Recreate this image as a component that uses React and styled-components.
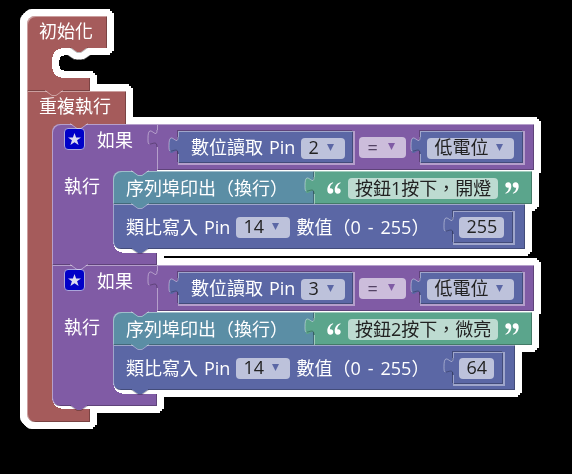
import React from "react";
import styled, { createGlobalStyle } from "styled-components";

const RED = "#a55b5b";
const PURPLE = "#805ba5";
const BLUE = "#5b67a5";
const TEAL = "#5b8ea5";
const GREEN = "#5ba58c";
const LIGHT = "rgba(255, 255, 255, 0.42)";
const DARK = "rgba(0, 0, 0, 0.26)";

const GlobalStyle = createGlobalStyle`
  body {
    margin: 0;
    background: #000;
    color: #fff;
    font: 18px/24px "Open Sans", "Noto Sans CJK TC", sans-serif;
  }
`;

const Workspace = styled.main`
  padding: 16px 27px;
`;

/* The chained hard shadows grow the silhouette into a white rim. */
const Program = styled.div`
  display: flex;
  flex-direction: column;
  width: max-content;
  filter: drop-shadow(3px 0 0 #fff) drop-shadow(-3px 0 0 #fff)
    drop-shadow(0 3px 0 #fff) drop-shadow(0 -3px 0 #fff)
    drop-shadow(2px 2px 0 #fff) drop-shadow(-2px -2px 0 #fff)
    drop-shadow(2px -2px 0 #fff) drop-shadow(-2px 2px 0 #fff);
`;

const BlockGroup = styled.section`
  display: flex;
  flex-direction: column;
  align-items: flex-start;
`;

const Row = styled.div`
  display: flex;
  align-items: ${(p) => (p.$stretch ? "stretch" : "flex-start")};
`;

const Head = styled.header`
  position: relative;
  display: flex;
  box-sizing: border-box;
  height: ${(p) => p.$height}px;
  padding: ${(p) => p.$padding};
  background: ${(p) => p.$color};
  border-top-left-radius: ${(p) => (p.$rounded ? 8 : 0)}px;
  box-shadow: inset 1px 1px 0 ${LIGHT}, inset -1px 0 0 ${(p) => (p.$joined ? "transparent" : DARK)};
  white-space: nowrap;
`;

const Wall = styled.div`
  box-sizing: border-box;
  width: ${(p) => p.$width}px;
  padding: 3px 12px;
  background: ${(p) => p.$color};
  box-shadow: inset 1px 0 0 ${LIGHT};
  white-space: nowrap;
`;

const Slot = styled.div`
  min-width: 38px;
  min-height: 30px;
  padding-bottom: ${(p) => p.$gap || 0}px;
  background:
    radial-gradient(circle at 100% 100%, transparent 8px, ${(p) => p.$color} 8px) top left / 9px 9px no-repeat,
    radial-gradient(circle at 100% 0, transparent 8px, ${(p) => p.$color} 8px) bottom left / 9px 9px no-repeat;
`;

const Foot = styled.footer`
  position: relative;
  width: ${(p) => p.$width}px;
  height: ${(p) => p.$height}px;
  background: ${(p) => p.$color};
  border-bottom-left-radius: ${(p) => (p.$rounded ? 8 : 0)}px;
  box-shadow: inset 1px 0 0 ${LIGHT}, inset -1px -1px 0 ${DARK};
`;

const Statement = styled.div`
  position: relative;
  display: flex;
  align-items: center;
  box-sizing: border-box;
  width: max-content;
  height: ${(p) => p.$height}px;
  padding: 0 ${(p) => p.$right}px 0 13px;
  background: ${(p) => p.$color};
  border-radius: ${(p) => (p.$last ? "0 0 0 8px" : "8px 0 0 0")};
  box-shadow: inset 1px 1px 0 ${LIGHT}, inset -1px -1px 0 ${DARK};
  white-space: nowrap;
`;

const ValueBlock = styled.div`
  position: relative;
  display: flex;
  align-items: center;
  box-sizing: border-box;
  height: ${(p) => p.$height}px;
  padding: ${(p) => p.$padding};
  background: ${(p) => p.$color};
  box-shadow: inset 1px 1px 0 ${LIGHT}, inset -1px -1px 0 ${DARK}${(p) =>
    p.$inset ? `, 1px 1px 0 1px ${LIGHT}, -1px -1px 0 ${DARK}` : ""};
  white-space: nowrap;
`;

const FieldLabel = styled.label`
  display: flex;
  align-items: center;
  gap: 6px;
`;

const Select = styled.select`
  appearance: none;
  box-sizing: border-box;
  height: 21px;
  margin: ${(p) => (p.$operator ? "0 14px 0 6px" : "2px 0 0")};
  padding: ${(p) => (p.$operator ? "0 28px 1px 8px" : "0 26px 3px 7px")};
  border: 0;
  border-radius: 4px;
  color: ${(p) => (p.$operator ? "#534364" : "#222")};
  font: inherit;
  line-height: 18px;
  background:
    url("data:image/svg+xml,%3Csvg xmlns='http://www.w3.org/2000/svg' width='7' height='7'%3E%3Cpath d='M0 0h7L3.5 7z' fill='%23${(p) =>
      p.$color.slice(1)}'/%3E%3C/svg%3E") right 11px top 6px no-repeat,
    rgba(255, 255, 255, 0.6);
`;

const Input = styled.input`
  field-sizing: content;
  box-sizing: border-box;
  height: 21px;
  margin: 2px 0 0;
  padding: 0 7px 3px;
  border: 0;
  border-radius: 4px;
  background: rgba(255, 255, 255, 0.6);
  color: #222;
  font: inherit;
  line-height: 18px;
`;

const Range = styled.span`
  display: flex;
  gap: 7px;
  margin: 0 24px 0 6px;
`;

const Mutator = styled.button`
  display: flex;
  box-sizing: border-box;
  width: 21px;
  height: 22px;
  margin: 0 12px 0 0;
  padding: 2px;
  border: 1px solid #aaa5dc;
  border-radius: 4px;
  background: #0000c8;
`;

const BumpShape = styled.svg`
  position: absolute;
  z-index: 1;
  left: ${(p) => p.$left}px;
  bottom: -5px;
  overflow: visible;
`;

const TabShape = styled.svg`
  position: absolute;
  left: -9px;
  top: 6px;
  overflow: visible;
`;

const QuoteShape = styled.svg`
  margin: ${(p) => (p.$closing ? "0 0 0 7px" : "0 7px 0 0")};
  transform: ${(p) => (p.$closing ? "rotate(180deg)" : "none")};
`;

function Bump({ color, left = 18, edge = LIGHT }) {
  return (
    <BumpShape $left={left} width="18" height="6" aria-hidden="true">
      <path d="M0 0V-1H18V0L11 5H7Z" fill={color} />
      <path d="M0 .5L7 5.5H11L18 .5" fill="none" stroke={edge} />
    </BumpShape>
  );
}

function Tab({ color }) {
  return (
    <TabShape width="10" height="17" aria-hidden="true">
      <path d="M10 17H9C9 6 0 26 0 8.5S9 11 9 0H10Z" fill={color} />
      <path d="M9 0C9 11 0 -9 0 8.5C0 12 0 14 1.5 14" fill="none" stroke={LIGHT} />
      <path d="M1.5 14C4 14.5 9 10 9 17" fill="none" stroke={DARK} />
    </TabShape>
  );
}

function Quote({ closing }) {
  return (
    <QuoteShape $closing={closing} width="14" height="12" viewBox="0 0 14 12" fill="#fff" aria-hidden="true">
      <path d="M6 .2C2.6 1 .3 4 .3 7.7C.3 10.3 1.5 11.8 3.4 11.8C5.1 11.8 6.3 10.6 6.3 9C6.3 7.4 5.2 6.3 3.7 6.3C3.3 6.3 3 6.4 2.8 6.5C3 4 4 2.2 6.2 1Z" />
      <path d="M13.4 .2C10 1 7.7 4 7.7 7.7C7.7 10.3 8.9 11.8 10.8 11.8C12.5 11.8 13.7 10.6 13.7 9C13.7 7.4 12.6 6.3 11.1 6.3C10.7 6.3 10.4 6.4 10.2 6.5C10.4 4 11.4 2.2 13.6 1Z" />
    </QuoteShape>
  );
}

function Dropdown({ value, color = BLUE, ...rest }) {
  return (
    <Select $color={color} defaultValue={value} {...rest}>
      <option value={value}>{value}</option>
    </Select>
  );
}

function PinField({ action, pin }) {
  return (
    <FieldLabel>
      <span>{action}</span>
      <span>Pin</span>
      <Dropdown value={pin} />
    </FieldLabel>
  );
}

function Condition({ pin }) {
  return (
    <ValueBlock $color={PURPLE} $height={46} $padding="0 11px 0 21px">
      <Tab color={PURPLE} />
      <ValueBlock $color={BLUE} $height={32} $padding="0 8px 0 13px" $inset>
        <Tab color={BLUE} />
        <PinField action="數位讀取" pin={pin} />
      </ValueBlock>
      <Dropdown value="=" color={PURPLE} $operator aria-label="比較" />
      <ValueBlock $color={BLUE} $height={32} $padding="0 9px 0 7px" $inset>
        <Tab color={BLUE} />
        <Dropdown value="低電位" aria-label="電位" />
      </ValueBlock>
    </ValueBlock>
  );
}

function PrintStatement({ text }) {
  return (
    <Row>
      <Statement $color={TEAL} $height={33} $right={26}>
        序列埠印出（換行）
        <Bump color={TEAL} />
      </Statement>
      <ValueBlock $color={GREEN} $height={33} $padding="0 13px">
        <Tab color={GREEN} />
        <Quote />
        <Input defaultValue={text} aria-label="序列埠印出" />
        <Quote closing />
      </ValueBlock>
    </Row>
  );
}

function WriteStatement({ value }) {
  return (
    <Statement $color={BLUE} $height={45} $right={12} $last>
      <PinField action="類比寫入" pin="14" />
      <Range>
        <span>數值（0</span>
        <span>-</span>
        <span>255）</span>
      </Range>
      <ValueBlock $color={BLUE} $height={32} $padding="0 9px 0 6px" $inset>
        <Tab color={BLUE} />
        <Input defaultValue={value} aria-label="數值" />
      </ValueBlock>
      <Bump color={BLUE} edge={DARK} />
    </Statement>
  );
}

function IfBlock({ pin, text, value, first, last }) {
  return (
    <BlockGroup>
      <Row>
        <Head $color={PURPLE} $height={47} $padding="4px 24px 0 12px" $rounded={first} $joined>
          <Mutator type="button" aria-label="設定">
            <svg width="15" height="16" viewBox="0 0 15 16" aria-hidden="true">
              <path d="M7.5 2L9.1 6.4H14L10.1 9.3L11.6 14L7.5 11.2L3.4 14L4.9 9.3L1 6.4H5.9Z" fill="#dcdcf0" />
            </svg>
          </Mutator>
          如果
          <Bump color={PURPLE} left={79} />
        </Head>
        <Condition pin={pin} />
      </Row>
      <Row $stretch>
        <Wall $color={PURPLE} $width={61}>執行</Wall>
        <Slot $color={PURPLE} $gap={4}>
          <PrintStatement text={text} />
          <WriteStatement value={value} />
        </Slot>
      </Row>
      <Foot $color={PURPLE} $width={105} $height={12} $rounded={last}>
        <Bump color={PURPLE} edge={last ? DARK : LIGHT} />
      </Foot>
    </BlockGroup>
  );
}

export default function App() {
  return (
    <>
      <GlobalStyle />
      <Workspace>
        <Program>
          <BlockGroup>
            <Head $color={RED} $height={32} $padding="3px 14px 0 12px" $rounded>
              初始化
              <Bump color={RED} left={43} edge={DARK} />
            </Head>
            <Row $stretch>
              <Wall $color={RED} $width={25} />
              <Slot $color={RED} />
            </Row>
            <Foot $color={RED} $width={63} $height={13}>
              <Bump color={RED} />
            </Foot>
          </BlockGroup>
          <BlockGroup>
            <Head $color={RED} $height={33} $padding="3px 15px 0 12px">
              重複執行
              <Bump color={RED} left={43} />
            </Head>
            <Row $stretch>
              <Wall $color={RED} $width={25} />
              <Slot $color={RED} $gap={3}>
                <IfBlock pin="2" text="按鈕1按下，開燈" value="255" first />
                <IfBlock pin="3" text="按鈕2按下，微亮" value="64" last />
              </Slot>
            </Row>
            <Foot $color={RED} $width={63} $height={13} $rounded />
          </BlockGroup>
        </Program>
      </Workspace>
    </>
  );
}
